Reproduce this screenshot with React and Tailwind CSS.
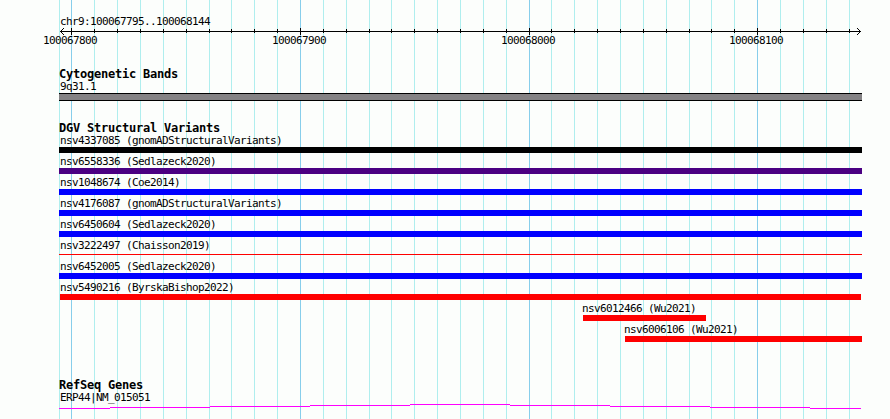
const GRID_MINOR = [
  59, 94, 117, 140, 163, 186, 209, 231, 254, 277, 323, 346, 369, 391, 414, 437, 460, 483, 506,
  551, 574, 597, 620, 643, 666, 689, 711, 734, 780, 803, 826, 849,
];

const GRID_MAJOR = [
  { x: 71, label: '100067800' },
  { x: 300, label: '100067900' },
  { x: 529, label: '100068000' },
  { x: 757, label: '100068100' },
];

// start / end are pixels on the track canvas
const VARIANTS = [
  { id: 'nsv4337085', study: 'gnomADStructuralVariants', start: 59, end: 862, color: 'bg-black' },
  { id: 'nsv6558336', study: 'Sedlazeck2020', start: 59, end: 862, color: 'bg-[#4b0082]' },
  { id: 'nsv1048674', study: 'Coe2014', start: 59, end: 862, color: 'bg-[#0000ff]' },
  { id: 'nsv4176087', study: 'gnomADStructuralVariants', start: 59, end: 862, color: 'bg-[#0000ff]' },
  { id: 'nsv6450604', study: 'Sedlazeck2020', start: 59, end: 862, color: 'bg-[#0000ff]' },
  { id: 'nsv3222497', study: 'Chaisson2019', start: 59, end: 862, color: 'bg-[#ff0000]', thin: true },
  { id: 'nsv6452005', study: 'Sedlazeck2020', start: 59, end: 862, color: 'bg-[#0000ff]' },
  { id: 'nsv5490216', study: 'ByrskaBishop2022', start: 60, end: 861, color: 'bg-[#ff0000]' },
  { id: 'nsv6012466', study: 'Wu2021', start: 583, end: 706, labelX: 582, color: 'bg-[#ff0000]' },
  { id: 'nsv6006106', study: 'Wu2021', start: 625, end: 862, labelX: 624, color: 'bg-[#ff0000]' },
];

const INTRON = [
  [59, 110, 408],
  [110, 210, 407],
  [210, 310, 406],
  [310, 410, 405],
  [410, 510, 404],
  [510, 610, 405],
  [610, 710, 406],
  [710, 810, 407],
  [810, 861, 408],
];

function Label({ children, x = 60 }) {
  return (
    <div
      className="h-[15px] whitespace-pre font-['DejaVu_Sans_Mono',monospace] text-[11px] leading-[17px] tracking-[-0.622px]"
      style={{ marginLeft: x }}
    >
      {children}
    </div>
  );
}

function Heading({ children }) {
  return (
    <h2 className="ml-[59px] h-3 whitespace-pre font-['DejaVu_Sans_Mono',monospace] text-[12px] leading-3 font-bold tracking-[-0.224px]">
      {children}
    </h2>
  );
}

function Gridlines() {
  return (
    <svg className="absolute inset-0" width="890" height="419" shapeRendering="crispEdges">
      {GRID_MINOR.map((x) => (
        <rect key={x} x={x} y="0" width="1" height="419" fill="#afeeee" />
      ))}
      {GRID_MAJOR.map(({ x }) => (
        <rect key={x} x={x} y="0" width="1" height="419" fill="#87ceeb" />
      ))}
    </svg>
  );
}

function Ruler() {
  return (
    <div className="relative h-[21px]">
      <svg className="block" width="890" height="8" shapeRendering="crispEdges">
        <rect x="60" y="3" width="801" height="1" />
        {GRID_MINOR.slice(1).map((x) => (
          <rect key={x} x={x} y="1" width="1" height="4" />
        ))}
        {GRID_MAJOR.map(({ x }) => (
          <rect key={x} x={x} y="0" width="1" height="7" />
        ))}
        {[1, 2, 3].map((d) => (
          <g key={d}>
            <rect x={60 + d} y={3 - d} width="1" height="1" />
            <rect x={60 + d} y={3 + d} width="1" height="1" />
            <rect x={860 - d} y={3 - d} width="1" height="1" />
            <rect x={860 - d} y={3 + d} width="1" height="1" />
          </g>
        ))}
      </svg>
      {GRID_MAJOR.map(({ x, label }) => (
        <div key={x} className="absolute top-1 left-0">
          <Label x={x - 28}>{label}</Label>
        </div>
      ))}
    </div>
  );
}

function Variant({ id, study, start, end, labelX, color, thin }) {
  return (
    <div className="h-[21px]">
      <Label x={labelX}>{`${id} (${study})`}</Label>
      <div className="flex h-1.5 items-center">
        <div
          className={`${color} ${thin ? 'mb-px h-px' : 'h-full'}`}
          style={{ marginLeft: start, width: end - start }}
        />
      </div>
    </div>
  );
}

export default function App() {
  return (
    <div className="relative h-[419px] w-[890px] overflow-hidden bg-[#fcfefc] text-black">
      <Gridlines />
      <div className="relative flex flex-col pt-[13px]">
        <Label>chr9:100067795..100068144</Label>
        <Ruler />

        <section className="mt-[19px]">
          <Heading>Cytogenetic Bands</Heading>
          <div className="-mt-0.5">
            <Label>9q31.1</Label>
          </div>
          <div className="ml-[59px] h-2 w-[803px] border-y border-black bg-[#848284]" />
        </section>

        <section className="mt-[21px]">
          <Heading>DGV Structural Variants</Heading>
          <div className="-mt-0.5">
            {VARIANTS.map((v) => (
              <Variant key={v.id} {...v} />
            ))}
          </div>
        </section>

        <section className="mt-[37px]">
          <Heading>RefSeq Genes</Heading>
          <div className="-mt-0.5">
            <Label>ERP44|NM_015051</Label>
          </div>
          <svg className="block" width="890" height="15" viewBox="0 404 890 15" shapeRendering="crispEdges">
            {INTRON.map(([x1, x2, y]) => (
              <rect key={x1} x={x1} y={y} width={x2 - x1} height="1" fill="#ff00ff" />
            ))}
          </svg>
        </section>
      </div>
    </div>
  );
}
